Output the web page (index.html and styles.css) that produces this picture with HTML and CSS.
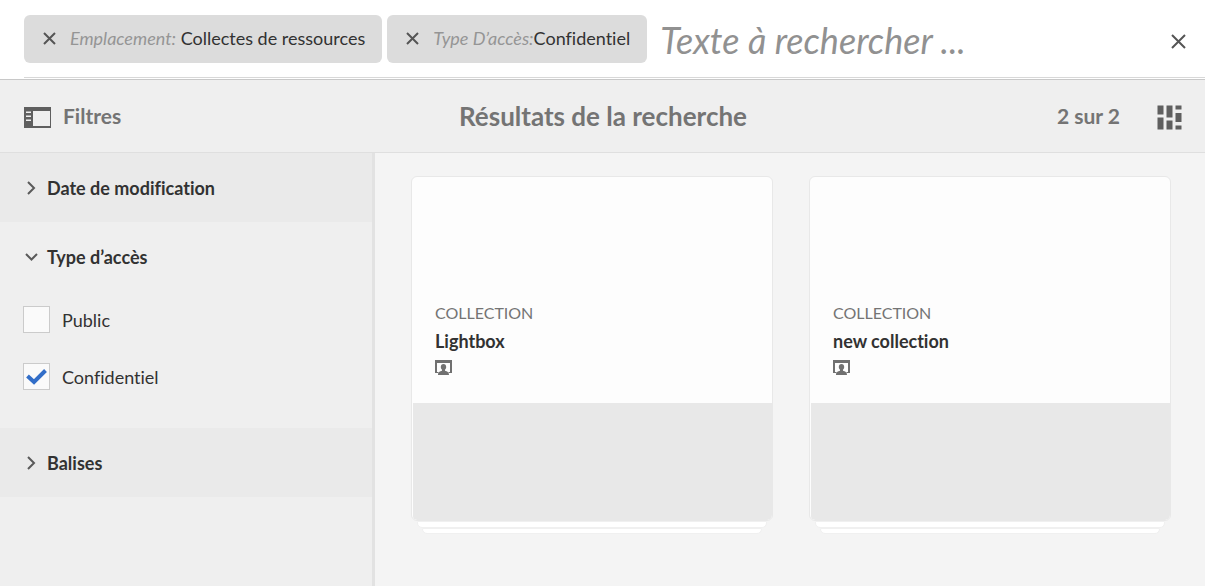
FILE: index.html
```html
<!DOCTYPE html>
<html lang="fr">
<head>
<meta charset="utf-8">
<meta name="viewport" content="width=device-width, initial-scale=1">
<title>Résultats de la recherche</title>
<link rel="stylesheet" href="styles.css">
</head>
<body>
<header class="search">
  <div class="search-inner">
    <div class="tag">
      <button class="tag-remove" type="button" aria-label="Supprimer Emplacement"><svg width="13" height="13" viewBox="0 0 13 13"><path d="M1 1l11 11M12 1L1 12"/></svg></button>
      <span><em>Emplacement:</em> Collectes de ressources</span>
    </div>
    <div class="tag">
      <button class="tag-remove" type="button" aria-label="Supprimer Type d’accès"><svg width="13" height="13" viewBox="0 0 13 13"><path d="M1 1l11 11M12 1L1 12"/></svg></button>
      <span><em>Type D’accès:</em>Confidentiel</span>
    </div>
    <input class="search-input" type="text" placeholder="Texte à rechercher ..." aria-label="Rechercher">
    <button class="search-close" type="button" aria-label="Fermer"><svg width="15" height="15" viewBox="0 0 15 15"><path d="M1 1l13 13M14 1L1 14"/></svg></button>
  </div>
</header>

<div class="toolbar">
  <button class="rail-toggle" type="button">
    <svg width="27" height="21" viewBox="0 0 27 21"><path fill="#5f5f5f" fill-rule="evenodd" d="M0 0h27v21H0zM9 4v15h17V4zM2 4.500v1.500h5V4.500zM2 8.500v1.500h5V8.500zM2 12.500v1.500h5v-1.500z"/></svg>
    Filtres
  </button>
  <h1 class="title">Résultats de la recherche</h1>
  <div class="tools">
    <span>2 sur 2</span>
    <button class="view" type="button" aria-label="Affichage en cartes">
      <svg width="25" height="25" viewBox="0 0 25 25"><path fill="#5f5f5f" d="M.5 .5h6v9h-6zM.5 12.500h6v12h-6zM9.500 .5h6v12h-6zM9.500 15.500h6v9h-6zM18.500 .5h6v4h-6zM18.500 8h6v9h-6zM18.500 20.500h6v4h-6z"/></svg>
    </button>
  </div>
</div>

<div class="body">
  <aside class="rail">
    <button class="section" type="button" aria-expanded="false"><svg width="14" height="14" viewBox="0 0 14 14"><path d="M4 1l6 6-6 6"/></svg>Date de modification</button>
    <div class="group">
      <button class="section open" type="button" aria-expanded="true"><svg width="14" height="14" viewBox="0 0 14 14"><path d="M2 4l5.500 5.500L13 4"/></svg>Type d’accès</button>
      <label class="option"><span class="box"><input type="checkbox"></span>Public</label>
      <label class="option"><span class="box"><input type="checkbox" checked><svg class="tick" width="27" height="27" viewBox="0 0 27 27"><path d="M4.500 13l6.500 6L22.500 7.500"/></svg></span>Confidentiel</label>
    </div>
    <button class="section" type="button" aria-expanded="false"><svg width="14" height="14" viewBox="0 0 14 14"><path d="M4 1l6 6-6 6"/></svg>Balises</button>
  </aside>

  <main class="results">
    <article class="stack">
      <div class="card">
        <div class="info">
          <p class="kind">COLLECTION</p>
          <h2 class="name">Lightbox</h2>
          <svg class="owner" width="17" height="15" viewBox="0 0 17 15"><path d="M0 0h17v13h-3l-1-1h2V3H2v9h2l-1 1H0z"/><path d="M8.500 4c1.700 0 2.700 1.200 2.700 2.900 0 1.200-.5 2-1.200 2.700v1.200c2 .5 4 1.200 4 4.200H3c0-3 2-3.700 4-4.200V9.600C6.300 8.900 5.800 8.100 5.800 6.900 5.800 5.200 6.800 4 8.500 4z"/></svg>
        </div>
        <div class="preview"></div>
      </div>
      <div class="sheet"></div>
      <div class="sheet last"></div>
    </article>
    <article class="stack">
      <div class="card">
        <div class="info">
          <p class="kind">COLLECTION</p>
          <h2 class="name">new collection</h2>
          <svg class="owner" width="17" height="15" viewBox="0 0 17 15"><path d="M0 0h17v13h-3l-1-1h2V3H2v9h2l-1 1H0z"/><path d="M8.500 4c1.700 0 2.700 1.200 2.700 2.900 0 1.200-.5 2-1.200 2.700v1.200c2 .5 4 1.200 4 4.200H3c0-3 2-3.700 4-4.200V9.600C6.300 8.900 5.800 8.100 5.800 6.900 5.800 5.200 6.800 4 8.500 4z"/></svg>
        </div>
        <div class="preview"></div>
      </div>
      <div class="sheet"></div>
      <div class="sheet last"></div>
    </article>
  </main>
</div>
</body>
</html>
```
FILE: styles.css
```css
* { box-sizing: border-box; }

body {
  margin: 0;
  min-height: 100vh;
  display: flex;
  flex-direction: column;
  background: #f4f4f4;
  color: #323232;
  font: 18px/24px Lato, "Noto Sans", sans-serif;
  font-variant-ligatures: none;
}

button {
  border: 0;
  padding: 0;
  background: none;
  color: inherit;
  font: inherit;
  font-variant-ligatures: none;
  cursor: pointer;
}

svg { display: block; flex: none; }
h1, h2, p { margin: 0; }

/* Search bar */
.search {
  padding: 0 0 1px 24px;
  background: #fff;
  border-bottom: 1px solid #c8c8c8;
}
.search-inner {
  display: flex;
  align-items: center;
  gap: 5px;
  padding: 15px 19px 14px 0;
  border-bottom: 1px solid #d8d8d8;
}
.tag {
  display: flex;
  align-items: center;
  gap: 14px;
  height: 48px;
  padding: 0 17px 2px 19px;
  border-radius: 6px;
  background: #dcdcdc;
  white-space: nowrap;
}
.tag em { color: #959595; }
.tag-remove svg, .search-close svg {
  fill: none;
  stroke: #555;
  stroke-width: 2;
}
.search-close { padding-top: 5px; }
.search-input {
  flex: 1;
  min-width: 0;
  height: 48px;
  padding: 2px 8px 0;
  border: 0;
  outline: 0;
  background: none;
  color: #323232;
  font: 36px/46px Lato, "Noto Sans", sans-serif;
}
.search-input::placeholder {
  color: #919191;
  font-style: italic;
  opacity: 1;
}

/* Toolbar */
.toolbar {
  display: grid;
  grid-template-columns: 1fr auto 1fr;
  align-items: center;
  min-height: 73px;
  padding: 0 23px 0 24px;
  background: #efefef;
  border-bottom: 1px solid #dfdfdf;
  color: #747474;
  font-size: 21px;
  font-weight: 700;
}
.rail-toggle {
  display: flex;
  align-items: center;
  gap: 12px;
  justify-self: start;
}
.rail-toggle svg { margin-top: 2px; }
.view { padding-top: 2px; }
.title { font-size: 26px; font-weight: 700; }
.tools {
  display: flex;
  align-items: center;
  justify-content: flex-end;
  gap: 37px;
}

/* Filter rail */
.body { flex: 1; display: flex; }
.rail {
  width: 375px;
  flex: none;
  background: #efefef;
  border-right: 3px solid #e2e2e2;
}
.section {
  display: flex;
  align-items: center;
  gap: 9px;
  width: 100%;
  height: 69px;
  padding: 0 24px;
  background: #eaeaea;
  font-weight: 700;
}
.section.open { background: none; }
.section svg { fill: none; stroke: #5a5a5a; stroke-width: 2; }
.group { padding-bottom: 23px; }
.option {
  display: flex;
  align-items: center;
  gap: 12px;
  height: 57px;
  padding: 0 23px;
}
.box { display: grid; }
.box > * { grid-area: 1 / 1; }
.box input {
  appearance: none;
  width: 27px;
  height: 27px;
  margin: 0;
  border: 1px solid #cbcbcb;
  background: #fafafa;
}
.tick {
  fill: none;
  stroke: #326ec8;
  stroke-width: 4;
  pointer-events: none;
  visibility: hidden;
}
.box input:checked + .tick { visibility: visible; }

/* Results */
.results {
  flex: 1;
  display: grid;
  grid-template-columns: 1fr 1fr;
  align-items: start;
  gap: 36px;
  padding: 23px 34px 24px 36px;
}
.card {
  overflow: hidden;
  border: 1px solid #e8e8e8;
  border-radius: 6px;
  background: #fdfdfd;
}
.info {
  display: flex;
  flex-direction: column;
  justify-content: flex-end;
  height: 226px;
  padding: 0 23px 28px;
}
.kind {
  color: #747474;
  font-size: 16px;
}
.name {
  margin: 4px 0 7px;
  font-size: 18px;
  font-weight: 700;
}
.owner { fill: #707070; }
.preview {
  height: 117px;
  margin-left: 1px;
  border-radius: 0 0 4px 4px;
  background: #e8e8e8;
}
.sheet {
  height: 7px;
  margin: 0 6px;
  border: 1px solid #f0f0f0;
  border-radius: 0 0 5px 5px;
  background: #fff;
}
.sheet.last { height: 6px; margin: 0 11px; }
```
